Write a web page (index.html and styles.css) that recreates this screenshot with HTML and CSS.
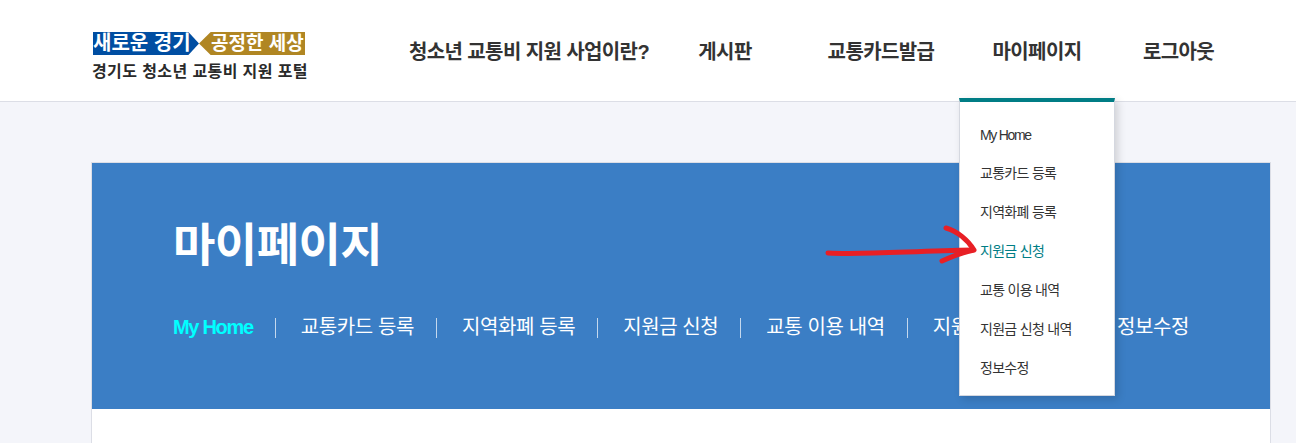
FILE: index.html

```html
<!DOCTYPE html>
<html lang="ko">
<head>
  <meta charset="UTF-8">
  <meta name="viewport" content="width=device-width, initial-scale=1.0">
  <title>경기도 청소년 교통비 지원 포털</title>
  <link rel="stylesheet" href="styles.css">
</head>
<body>

  <header class="header">
    <a href="#" class="logo">
      <span class="logo-top">
        <span class="logo-blue">새로운 경기</span>
        <span class="logo-gold">공정한 세상</span>
      </span>
      <span class="logo-name">경기도 청소년 교통비 지원 포털</span>
    </a>
    <nav class="gnb">
      <a href="#" class="gnb-item gnb-intro">청소년 교통비 지원 사업이란?</a>
      <a href="#" class="gnb-item gnb-board">게시판</a>
      <a href="#" class="gnb-item gnb-card">교통카드발급</a>
      <div class="gnb-item gnb-my">
        <a href="#">마이페이지</a>
        <ul class="dropdown">
          <li><a href="#" class="en">My Home</a></li>
          <li><a href="#">교통카드 등록</a></li>
          <li><a href="#">지역화폐 등록</a></li>
          <li><a href="#" class="on">지원금 신청</a></li>
          <li><a href="#">교통 이용 내역</a></li>
          <li><a href="#">지원금 신청 내역</a></li>
          <li><a href="#">정보수정</a></li>
        </ul>
      </div>
      <a href="#" class="gnb-item gnb-logout">로그아웃</a>
    </nav>
  </header>

  <main class="content">
    <section class="card">
      <div class="visual">
        <h1>마이페이지</h1>
        <ul class="tabs">
          <li><a href="#" class="active">My Home</a></li>
          <li><a href="#">교통카드 등록</a></li>
          <li><a href="#">지역화폐 등록</a></li>
          <li><a href="#">지원금 신청</a></li>
          <li><a href="#">교통 이용 내역</a></li>
          <li><a href="#">지원금 신청 내역</a></li>
          <li><a href="#">정보수정</a></li>
        </ul>
      </div>
    </section>
  </main>

  <svg class="arrow" width="160" height="50" viewBox="0 0 160 50">
    <path d="M3 29C40 31 85 27 148 26" />
    <path d="M121 4C132 7 143 16 149 26C138 28 126 33 117 37" />
  </svg>

</body>
</html>
```

FILE: styles.css

```css
* {
  box-sizing: border-box;
}
html, body {
  height: 443px;
  overflow: hidden;
}
body {
  margin: 0;
  font-family: "Liberation Sans", "Noto Sans CJK KR", sans-serif;
  background: #f4f5fa;
  color: #333;
}
a {
  color: inherit;
  text-decoration: none;
}
ul {
  list-style: none;
  margin: 0;
  padding: 0;
}

/* header */
.header {
  display: flex;
  height: 102px;
  padding-left: 92px;
  background: #fff;
  border-bottom: 1px solid #dcdee6;
}
.logo {
  display: flex;
  flex-direction: column;
  width: 216px;
  padding-top: 32px;
}
.logo-top {
  display: flex;
  height: 23px;
  margin-left: 1px;
  color: #fff;
  font-size: 20px;
  font-weight: 700;
  line-height: 23px;
  white-space: nowrap;
}
.logo-blue {
  width: 106px;
  background: #004ea2;
  clip-path: polygon(0 0, 90% 0, 100% 50%, 90% 100%, 0 100%);
}
.logo-gold {
  width: 106px;
  padding-left: 12px;
  background: #b08623;
  font-size: 19px;
  clip-path: polygon(0 50%, 11% 0, 100% 0, 100% 100%, 11% 100%);
}
.logo-name {
  margin-top: 6px;
  color: #2a2a2a;
  font-size: 16px;
  font-weight: 700;
  line-height: 22px;
  letter-spacing: 0.4px;
  white-space: nowrap;
}
.gnb {
  display: flex;
  margin-left: 100px;
  font-size: 20px;
  font-weight: 700;
  letter-spacing: -0.6px;
  line-height: 105px;
  color: #333;
}
.gnb-item {
  display: block;
  position: relative;
  flex: none;
  text-align: center;
  white-space: nowrap;
}
.gnb-intro { width: 242px; }
.gnb-board { width: 150px; margin-right: 3px; }
.gnb-card { width: 156px; }
.gnb-my { width: 156px; }
.gnb-logout { width: 127px; }

.dropdown {
  position: absolute;
  top: 98px;
  left: 0;
  width: 156px;
  height: 298px;
  padding-top: 14px;
  background: #fff;
  border: 1px solid #d5d8e0;
  border-top: 4px solid #007d85;
  box-shadow: 3px 3px 8px rgba(0, 0, 0, 0.15);
  font-size: 14px;
  font-weight: 400;
  line-height: 39px;
  letter-spacing: -0.7px;
  text-align: left;
  z-index: 2;
}
.dropdown li {
  height: 39px;
  padding-left: 20px;
}
.dropdown li:first-child {
  height: 38px;
}
.dropdown .on {
  color: #007d85;
}
.dropdown .en {
  letter-spacing: -1.3px;
}

/* page */
.content {
  padding: 60px 25px 0 91px;
}
.card {
  height: 300px;
  background: #fff;
  border: 1px solid #dcdee6;
}
.visual {
  height: 246px;
  padding: 50px 0 0 81px;
  background: #3b7ec5;
  color: #fff;
}
.visual h1 {
  margin: 0;
  font-size: 46px;
  font-weight: 700;
  line-height: 64px;
  letter-spacing: -0.5px;
}
.tabs {
  display: flex;
  align-items: center;
  margin-top: 36px;
  font-size: 20px;
  font-weight: 400;
  line-height: 28px;
  letter-spacing: -0.4px;
  white-space: nowrap;
}
.tabs li + li {
  position: relative;
  margin-left: 48px;
}
.tabs li + li::before {
  content: "";
  position: absolute;
  left: -26px;
  top: 5px;
  width: 1px;
  height: 20px;
  background: rgba(255, 255, 255, 0.7);
}
.tabs .active {
  color: #0ff;
  font-weight: 700;
  letter-spacing: -1.3px;
}

.arrow {
  position: absolute;
  left: 825px;
  top: 224px;
  z-index: 3;
  fill: none;
  stroke: #e81f25;
  stroke-width: 5;
  stroke-linecap: round;
  stroke-linejoin: round;
}
```
